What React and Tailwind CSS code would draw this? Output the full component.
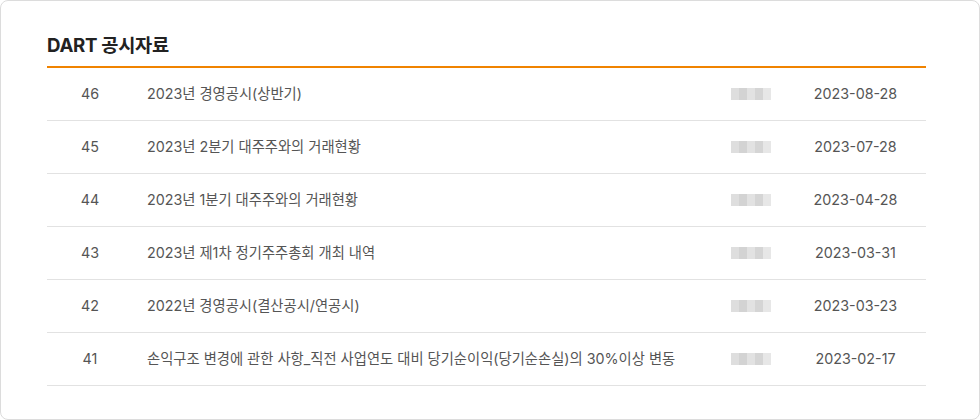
import React from "react";

const rows = [
  { no: 46, title: "2023년 경영공시(상반기)", date: "2023-08-28" },
  { no: 45, title: "2023년 2분기 대주주와의 거래현황", date: "2023-07-28" },
  { no: 44, title: "2023년 1분기 대주주와의 거래현황", date: "2023-04-28" },
  { no: 43, title: "2023년 제1차 정기주주총회 개최 내역", date: "2023-03-31" },
  { no: 42, title: "2022년 경영공시(결산공시/연공시)", date: "2023-03-23" },
  {
    no: 41,
    title: "손익구조 변경에 관한 사항_직전 사업연도 대비 당기순이익(당기순손실)의 30%이상 변동",
    date: "2023-02-17",
  },
];

// pixelated name placeholder
const Blur = () => (
  <div className="flex h-[12px] w-[40px] opacity-80">
    <span className="w-[8px] bg-[#d6d6d6]" />
    <span className="w-[8px] bg-[#c9c9c9]" />
    <span className="w-[8px] bg-[#dcdcdc]" />
    <span className="w-[8px] bg-[#cbcbcb]" />
    <span className="w-[8px] bg-[#e2e2e2]" />
  </div>
);

const App = () => {
  return (
    <div
      className="h-[420px] w-[980px] bg-white"
      style={{ fontFamily: 'Inter, "Noto Sans CJK KR", sans-serif' }}
    >
      <div className="h-full rounded-[8px] border border-[#dcdcdc] pl-[46px] pr-[53px] pt-[30px]">
        <h2 className="text-[18.7px] font-bold leading-[30px] tracking-[-0.3px] text-[#222]">
          DART 공시자료
        </h2>
        <div className="mt-[5px] h-[2px] bg-[#f08300]" />
        <ul>
          {rows.map((r) => (
            <li
              key={r.no}
              className="flex h-[53px] items-center border-b border-[#e2e2e2] text-[14.3px] text-[#555]"
            >
              <div className="w-[86px] text-center">{r.no}</div>
              <div className="ml-[14px] w-[540px] truncate">{r.title}</div>
              <div className="ml-[44px] w-[60px]">
                <Blur />
              </div>
              <div className="flex-1 pr-[6px] text-center">{r.date}</div>
            </li>
          ))}
        </ul>
      </div>
    </div>
  );
};

export default App;
